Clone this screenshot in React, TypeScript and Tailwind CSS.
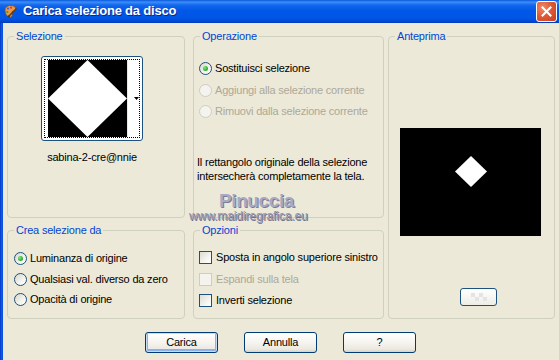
import React from "react";

function Radio({ checked = false, disabled = false }: { checked?: boolean; disabled?: boolean }) {
  return (
    <span
      className={
        "w-[13px] h-[13px] rounded-full border shrink-0 flex items-center justify-center " +
        (disabled
          ? "border-[#cfcdc2] bg-[#f4f3ee]"
          : "border-[#1c5180] bg-[linear-gradient(135deg,#d6d5cc_0%,#f2f2ee_55%,#ffffff_100%)]")
      }
    >
      {checked && (
        <span className="w-[5px] h-[5px] rounded-full bg-[radial-gradient(circle_at_35%_35%,#8ae986_0%,#3bb73a_50%,#1f9a1f_100%)]" />
      )}
    </span>
  );
}

function Check({ disabled = false }: { disabled?: boolean }) {
  return (
    <span
      className={
        "w-[13px] h-[13px] border shrink-0 " +
        (disabled
          ? "border-[#cfcdc2] bg-[#f4f3ee]"
          : "border-[#1c5180] bg-[linear-gradient(135deg,#dcdcd4_0%,#f4f4f0_60%,#ffffff_100%)]")
      }
    />
  );
}

function Group({
  title,
  className,
  children,
}: {
  title: string;
  className?: string;
  children?: React.ReactNode;
}) {
  return (
    <fieldset className={"border border-[#d0d0bf] rounded-[4px] min-w-0 " + (className ?? "")}>
      <legend className="ml-[6px] px-[2px] text-[#0046d5] leading-[13px]">{title}</legend>
      {children}
    </fieldset>
  );
}

function Button({ label, def = false }: { label: string; def?: boolean }) {
  return (
    <div
      className={
        "w-[73px] h-[21px] rounded-[3px] border border-[#003c74] flex items-center justify-center text-black bg-[linear-gradient(to_bottom,#ffffff_0%,#f5f4ef_50%,#ebe9e0_85%,#d8d3c6_100%)] " +
        (def ? "shadow-[inset_0_0_0_1px_#c8daf8,inset_0_-1px_0_2px_#8eb0ec]" : "")
      }
    >
      {label}
    </div>
  );
}

function AppIcon() {
  return (
    <svg width="15" height="15" viewBox="0 0 15 15">
      <path d="M2 6 C2 2.5 6 1 9 1.6 C12.5 2.3 13.5 5 12 6.5 C11 7.5 9.5 6.8 9 8 C8.5 9.5 10 11 8.5 12.8 C7 14.5 2 12 2 6 Z" fill="#e89a4a" stroke="#8a4a18" strokeWidth="0.8" />
      <circle cx="5" cy="4.5" r="1.1" fill="#2a6de0" />
      <circle cx="8" cy="3.7" r="1.1" fill="#e43a2a" />
      <circle cx="4.3" cy="8" r="1.1" fill="#2ea83a" />
      <path d="M6 12 L13.5 4.5" stroke="#6b3a12" strokeWidth="1.6" />
      <path d="M5 13.2 L6.6 11.6" stroke="#3a3a3a" strokeWidth="2" />
    </svg>
  );
}

export default function App() {
  return (
    <div className="relative w-[559px] h-[360px] overflow-hidden bg-[#ece9d8] font-['Liberation_Sans',Arial,sans-serif] text-[11px] tracking-[-0.2px] text-black">
      {/* Title bar */}
      <div className="h-[23px] flex items-center bg-[linear-gradient(to_bottom,#0a58dc_0%,#3d8ef9_9%,#1467ee_22%,#0058e8_45%,#0055e5_80%,#0049d6_92%,#003bb8_100%)]">
        <div className="ml-[3px] mt-[-1px] w-[15px] h-[15px]">
          <AppIcon />
        </div>
        <span className="ml-[5px] mt-[-1px] text-white font-bold text-[13px] tracking-[-0.2px] [text-shadow:1px_1px_0_#0a2a8a]">
          Carica selezione da disco
        </span>
        <div className="ml-auto mr-[2px] w-[21px] h-[21px] rounded-[3px] border border-white bg-[radial-gradient(circle_at_30%_30%,#f08a6a_0%,#e05a36_45%,#c8401e_100%)] flex items-center justify-center">
          <svg width="11" height="11" viewBox="0 0 11 11">
            <path d="M1.5 1.5 L9.5 9.5 M9.5 1.5 L1.5 9.5" stroke="#ffffff" strokeWidth="2" strokeLinecap="square" />
          </svg>
        </div>
      </div>

      <div className="flex h-[337px]">
        {/* Left window frame */}
        <div className="w-[3px] bg-[linear-gradient(to_right,#0831b8,#0a5ae8_40%,#0650e0)]" />
        <div className="flex-1 flex flex-col pl-[4px] pt-[7px]">
          <div className="flex">
            <div className="grid grid-cols-[178px_191px] grid-rows-[188px_95px] gap-x-[8px] gap-y-[6px]">
              {/* Selezione */}
              <Group title="Selezione">
                <div className="ml-[33px] mt-[13px] w-[102px] flex flex-col items-center">
                  <div className="w-[102px] h-[85px] rounded-[3px] border border-[#1c5180] bg-white p-[2px]">
                    <div className="w-full h-full border border-dotted border-black flex">
                      <div className="ml-[3px] w-[79px] h-full bg-black">
                        <svg width="79" height="77" viewBox="0 0 79 77">
                          <polygon points="39.5,0 79,38.5 39.5,77 0,38.5" fill="#ffffff" />
                        </svg>
                      </div>
                      <div className="flex-1 flex items-center justify-end border-l border-[#e8e8e8]">
                        <svg width="5" height="3" viewBox="0 0 5 3">
                          <polygon points="0,0 5,0 2.5,3" fill="#000000" />
                        </svg>
                      </div>
                    </div>
                  </div>
                  <div className="mt-[10px] leading-[13px]">sabina-2-cre@nnie</div>
                </div>
              </Group>

              {/* Operazione */}
              <Group title="Operazione">
                <div className="pl-[5px] flex flex-col">
                  <div className="mt-[19px] flex items-center gap-[3px] leading-[13px]">
                    <Radio checked />
                    <span>Sostituisci selezione</span>
                  </div>
                  <div className="mt-[9px] flex items-center gap-[3px] leading-[13px] text-[#aca899]">
                    <Radio disabled />
                    <span>Aggiungi alla selezione corrente</span>
                  </div>
                  <div className="mt-[8px] flex items-center gap-[3px] leading-[13px] text-[#aca899]">
                    <Radio disabled />
                    <span>Rimuovi dalla selezione corrente</span>
                  </div>
                  <p className="mt-[37px] ml-[-2px] leading-[14px]">
                    Il rettangolo originale della selezione
                    <br />
                    intersecherà completamente la tela.
                  </p>
                </div>
              </Group>

              {/* Crea selezione da */}
              <Group title="Crea selezione da">
                <div className="pl-[6px] flex flex-col">
                  <div className="mt-[15px] flex items-center gap-[3px] leading-[13px]">
                    <Radio checked />
                    <span>Luminanza di origine</span>
                  </div>
                  <div className="mt-[8px] flex items-center gap-[3px] leading-[13px]">
                    <Radio />
                    <span>Qualsiasi val. diverso da zero</span>
                  </div>
                  <div className="mt-[7px] flex items-center gap-[3px] leading-[13px]">
                    <Radio />
                    <span>Opacità di origine</span>
                  </div>
                </div>
              </Group>

              {/* Opzioni */}
              <Group title="Opzioni">
                <div className="pl-[5px] flex flex-col">
                  <div className="mt-[14px] flex items-center gap-[4px] leading-[13px]">
                    <Check />
                    <span>Sposta in angolo superiore sinistro</span>
                  </div>
                  <div className="mt-[9px] flex items-center gap-[4px] leading-[13px] text-[#aca899]">
                    <Check disabled />
                    <span>Espandi sulla tela</span>
                  </div>
                  <div className="mt-[8px] flex items-center gap-[4px] leading-[13px]">
                    <Check />
                    <span>Inverti selezione</span>
                  </div>
                </div>
              </Group>
            </div>

            {/* Anteprima */}
            <Group title="Anteprima" className="ml-[4px] w-[167px] h-[289px]">
              <div className="flex flex-col">
                <div className="mt-[85px] ml-[11px] w-[141px] h-[108px] bg-black flex justify-center">
                  <svg width="32" height="31" viewBox="0 0 32 31" className="mt-[28px]">
                    <polygon points="16,0 32,15.5 16,31 0,15.5" fill="#ffffff" />
                  </svg>
                </div>
                <div className="mt-[52px] ml-[71px] w-[37px] h-[18px] rounded-[3px] border border-[#1c5180] bg-[linear-gradient(to_bottom,#ffffff,#eeede6)] flex items-center justify-center">
                  <svg width="16" height="8" viewBox="0 0 16 8">
                    <rect x="0" y="0" width="4" height="4" fill="#e4e4e4" />
                    <rect x="8" y="0" width="4" height="4" fill="#e4e4e4" />
                    <rect x="4" y="4" width="4" height="4" fill="#e4e4e4" />
                    <rect x="12" y="4" width="4" height="4" fill="#e4e4e4" />
                  </svg>
                </div>
              </div>
            </Group>
          </div>

          {/* Buttons */}
          <div className="mt-[13px] ml-[138px] flex gap-[26px]">
            <Button label="Carica" def />
            <Button label="Annulla" />
            <Button label="?" />
          </div>
        </div>
      </div>

      {/* Watermark overlay */}
      <div className="absolute left-[219px] top-[191px] text-[19px] leading-[19px] font-bold tracking-[-0.4px] text-[#a9a9c2] [text-shadow:1px_1px_0_#7c7c96]">
        Pinuccia
      </div>
      <div className="absolute left-[189px] top-[212px] text-[12px] leading-[9px] tracking-[-0.1px] text-[#9595ac] [text-shadow:1px_1px_0_#70708a]">
        www.maidiregrafica.eu
      </div>
    </div>
  );
}
